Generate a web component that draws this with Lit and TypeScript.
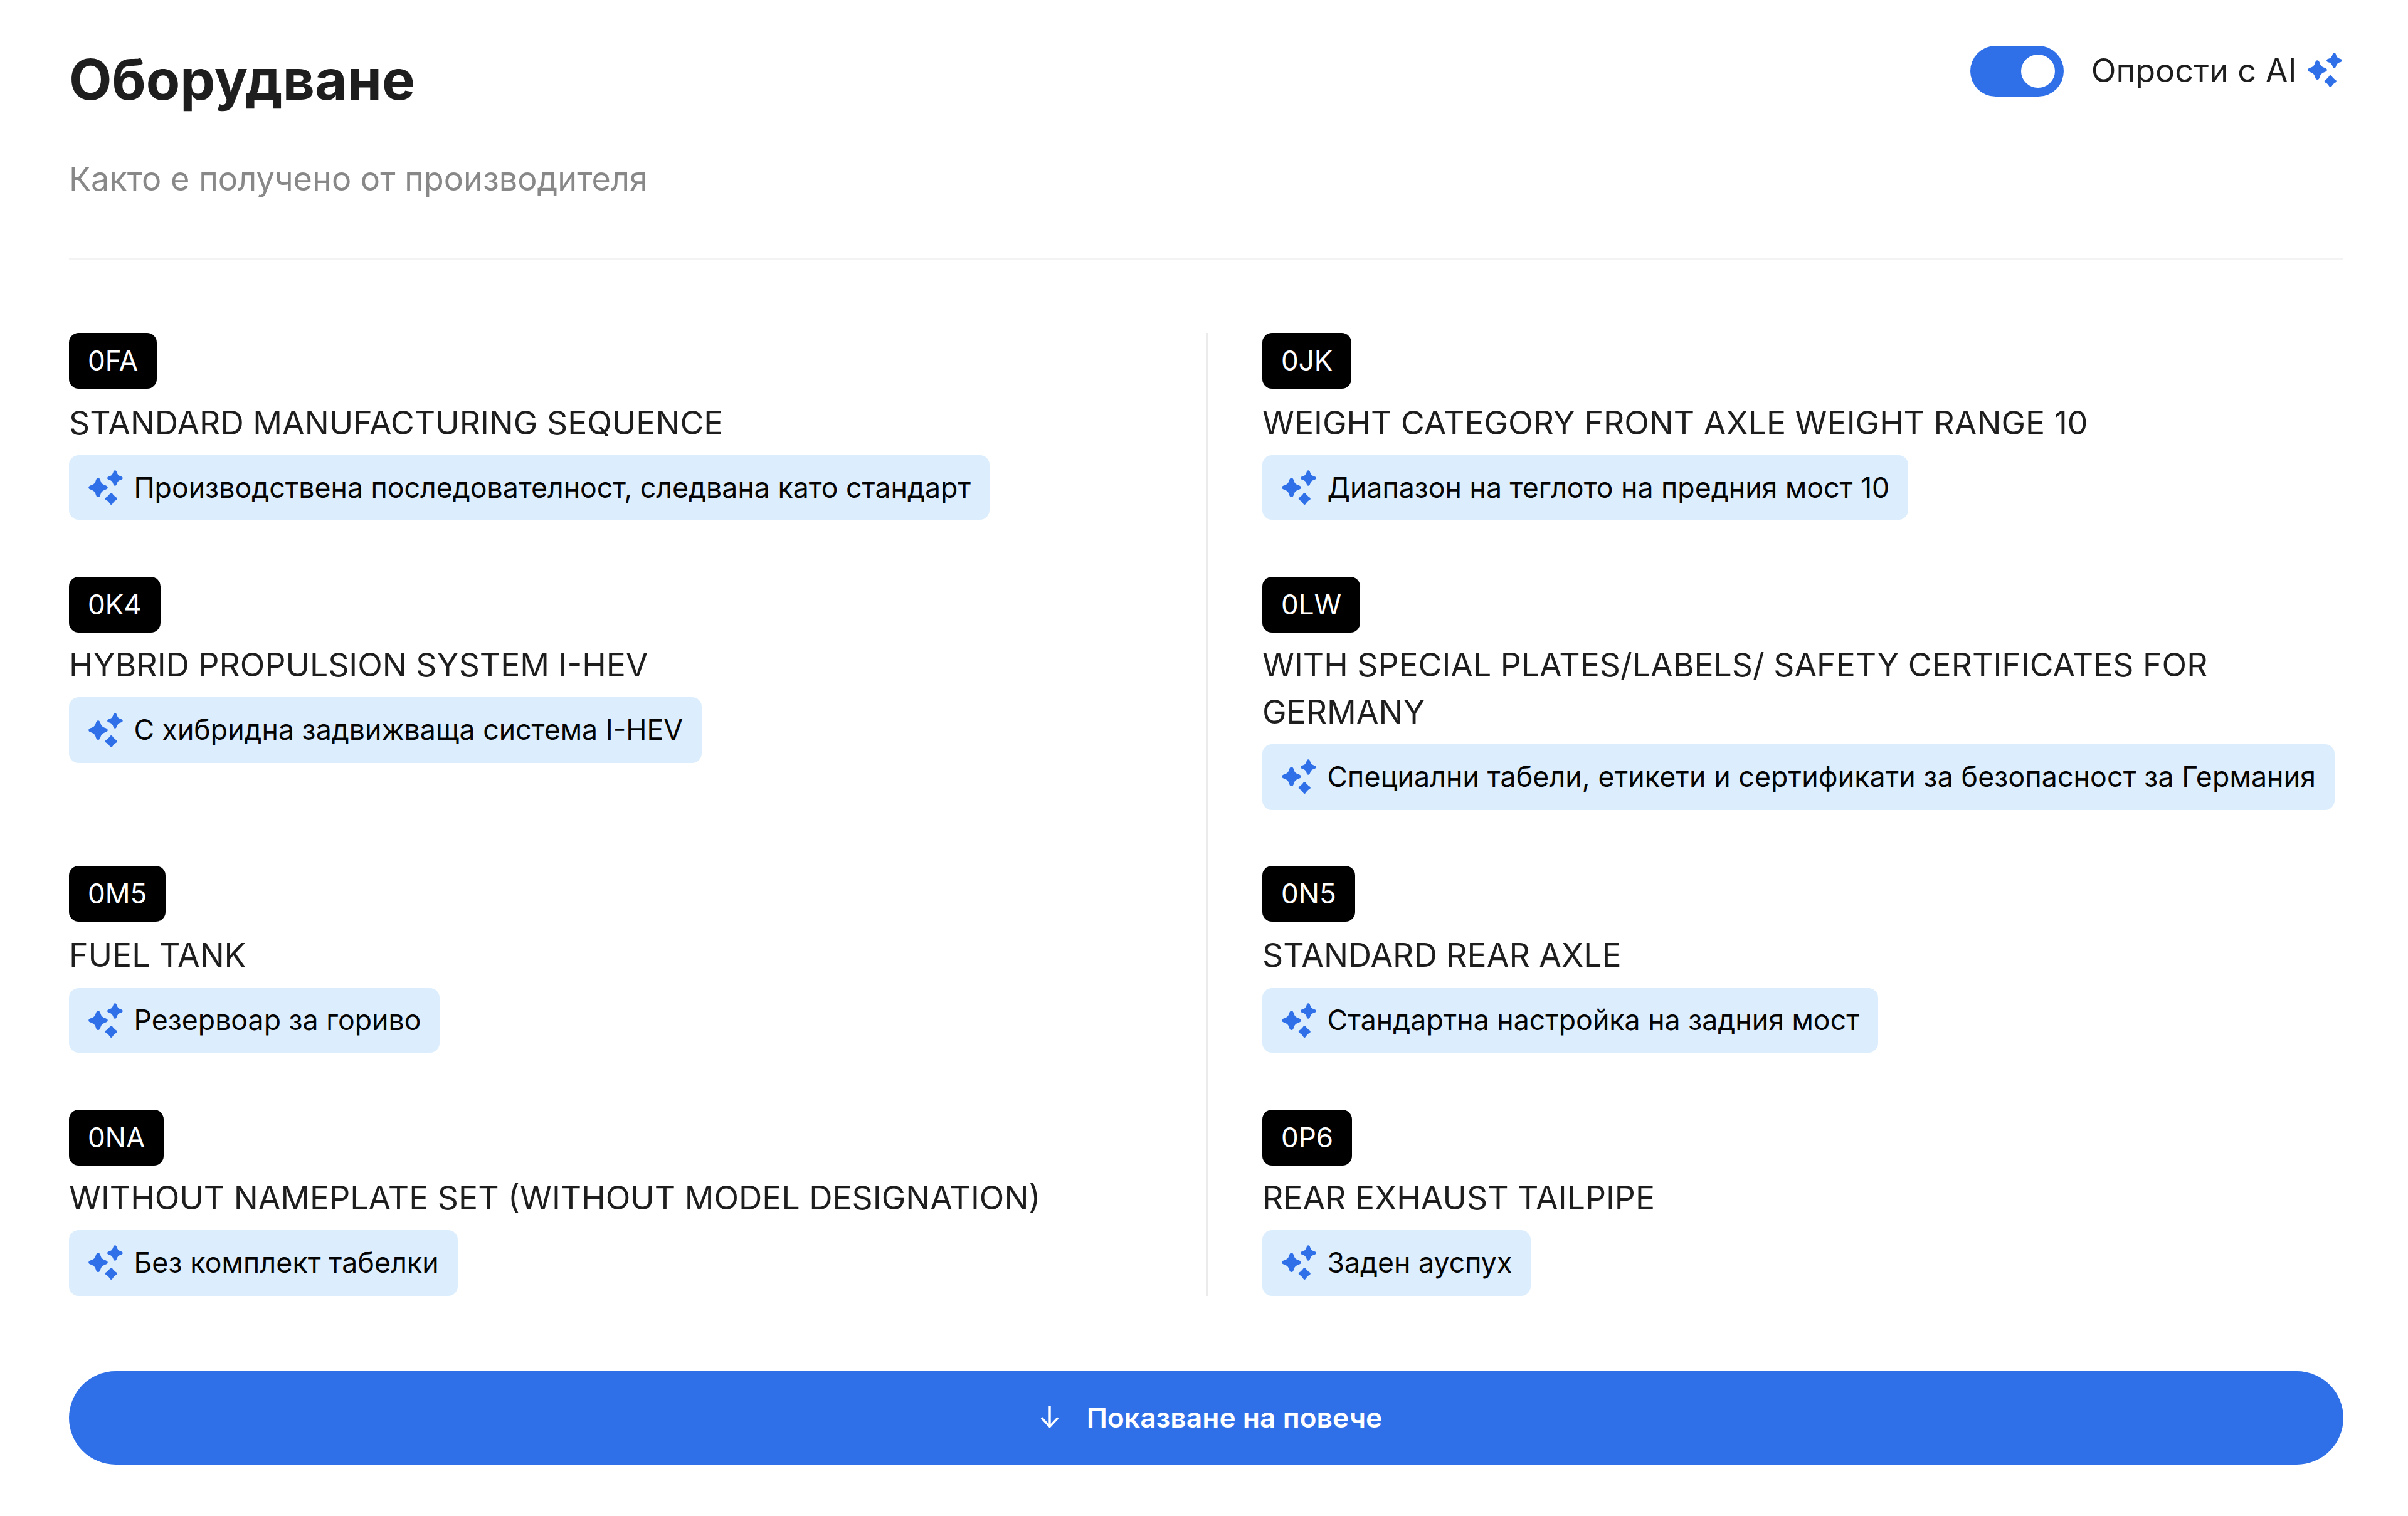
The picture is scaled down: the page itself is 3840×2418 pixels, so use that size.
import { LitElement, html, css, svg } from "lit";
import { customElement, property, state } from "lit/decorators.js";
import { classMap } from "lit/directives/class-map.js";

interface Equipment {
  code: string;
  name: string;
  simplified: string;
  loose?: boolean;
}

const EQUIPMENT: Equipment[] = [
  { code: "0FA", name: "STANDARD MANUFACTURING SEQUENCE", simplified: "Производствена последователност, следвана като стандарт" },
  { code: "0JK", name: "WEIGHT CATEGORY FRONT AXLE WEIGHT RANGE 10", simplified: "Диапазон на теглото на предния мост 10" },
  { code: "0K4", name: "HYBRID PROPULSION SYSTEM I-HEV", simplified: "С хибридна задвижваща система I-HEV" },
  { code: "0LW", name: "WITH SPECIAL PLATES/LABELS/ SAFETY CERTIFICATES FOR GERMANY", simplified: "Специални табели, етикети и сертификати за безопасност за Германия", loose: true },
  { code: "0M5", name: "FUEL TANK", simplified: "Резервоар за гориво" },
  { code: "0N5", name: "STANDARD REAR AXLE", simplified: "Стандартна настройка на задния мост" },
  { code: "0NA", name: "WITHOUT NAMEPLATE SET (WITHOUT MODEL DESIGNATION)", simplified: "Без комплект табелки", loose: true },
  { code: "0P6", name: "REAR EXHAUST TAILPIPE", simplified: "Заден ауспух" },
];

// One four-pointed star: centre, radius and how far the waist sits from the centre.
const star = (cx: number, cy: number, r: number, waist: number) => {
  const w = waist * r;
  const m = 0.15 * r;
  // Draws from the tip in direction a round the inner corner to the tip in direction b.
  const corner = (ax: number, ay: number, bx: number, by: number) => {
    const at = (a: number, b: number) => `${(cx + ax * a + bx * b).toFixed(2)},${(cy + ay * a + by * b).toFixed(2)}`;
    return `C${at(r, m)} ${at(r * 0.88, m * 1.3)} ${at(r * 0.64, w * 0.74)}Q${at(w, w)} ${at(w * 0.74, r * 0.64)}C${at(m * 1.3, r * 0.88)} ${at(m, r)} ${at(0, r)}`;
  };
  return `M${cx},${cy - r}${corner(0, -1, 1, 0)}${corner(1, 0, 0, 1)}${corner(0, 1, -1, 0)}${corner(-1, 0, 0, -1)}Z`;
};

@customElement("ai-sparkles")
export class AiSparkles extends LitElement {
  static styles = css`
    :host { display: block; flex: none; width: 55px; height: 55px; }
    .icon { display: block; width: 100%; height: 100%; fill: #2f70e9; }
  `;
  render() {
    return html`<svg class="icon" viewBox="0 0 55 55">
      ${svg`<path d=${star(15.5, 27.6, 15.3, 0.37)} />
      <path d=${star(42.4, 12.5, 12.3, 0.37)} />
      <path d=${star(36.3, 45.4, 9.5, 0.49)} />`}
    </svg>`;
  }
}

@customElement("equipment-item")
export class EquipmentItem extends LitElement {
  static styles = css`
    :host { display: block; }
    .item { display: flex; flex-direction: column; align-items: flex-start; padding-bottom: 1.9px; }
    .code {
      height: 89px; padding: 0 30px; border-radius: 15.5px; background: #000; color: #fff;
      font-size: 44px; line-height: 89px; margin-bottom: 16.6px;
    }
    .name { font-size: 51.74px; line-height: 74.5px; color: #1e1e1e; margin-bottom: 14.6px; }
    .simplified {
      display: flex; align-items: center; gap: 17.2px; height: 103.4px; box-sizing: border-box;
      padding: 0 29.8px 0 31.2px; border-radius: 15.5px; background: #dceefd; color: #050505;
      font-size: 44.66px; white-space: nowrap;
    }
    .loose { letter-spacing: 0.12px; }
    .even { padding-bottom: 0; }
    .even .code { margin-bottom: 14px; }
    .even .simplified { height: 105px; padding-bottom: 1.6px; }
  `;
  @property({ attribute: false }) item!: Equipment;
  @property({ type: Boolean }) even = false;
  @property({ type: Boolean }) ai = false;
  render() {
    const { code, name, simplified, loose } = this.item;
    return html`<div class=${classMap({ item: true, even: this.even })}>
      <div class="code">${code}</div>
      <div class="name">${name}</div>
      ${this.ai
        ? html`<div class="simplified">
            <ai-sparkles></ai-sparkles><span class=${classMap({ loose: !!loose })}>${simplified}</span>
          </div>`
        : null}
    </div>`;
  }
}

@customElement("app-root")
export class AppRoot extends LitElement {
  static styles = css`
    :host {
      display: block; box-sizing: border-box; min-height: 2418px; background: #fff; color: #1e1e1e;
      padding: 73px 103px 0 110px; font-family: Inter, "Liberation Sans", sans-serif;
    }
    .header {
      display: flex; justify-content: space-between; align-items: flex-start;
      height: 338px; border-bottom: 3px solid #f3f3f3;
    }
    .title { margin: 0; font-size: 88.9px; line-height: 108px; font-weight: 700; }
    .subtitle { margin: 66.5px 0 0; font-size: 52.2px; line-height: 75px; color: #888; }
    .simplify { display: flex; align-items: center; }
    .switch {
      display: flex; align-items: center; justify-content: flex-end; width: 149px; height: 81px;
      box-sizing: border-box; padding: 0 14px; border: 0; border-radius: 41px; background: #2f70e9;
    }
    .switch.off { justify-content: flex-start; }
    .knob { width: 54px; height: 53px; border-radius: 50%; background: #fff; }
    .label { margin: 0 17px 3px 44px; font-size: 52px; line-height: 75px; }
    .simplify ai-sparkles { margin: 0 2.5px 5px 0; }
    .list {
      display: grid; grid-template-columns: 1813px 3px 1fr; grid-template-rows: repeat(4, auto);
      row-gap: 89px; padding-top: 117.3px;
    }
    .rule { grid-column: 2; grid-row: 1 / -1; background: #ebebeb; }
    .left { grid-column: 1; }
    .right { grid-column: 3; padding-left: 87px; }
    .more {
      display: flex; align-items: center; justify-content: center; gap: 28px; width: 100%; height: 149px;
      margin-top: 119.7px; padding: 0; border: 0; border-radius: 75px; background: #2f70e9; color: #fff;
      font: 600 44.4px/60px Inter, "Liberation Sans", sans-serif;
    }
    .arrow { width: 62px; height: 62px; fill: none; stroke: #fff; stroke-width: 3.4; }
  `;
  @state() private ai = true;

  render() {
    return html`
      <header class="header">
        <div>
          <h1 class="title">Оборудване</h1>
          <p class="subtitle">Както е получено от производителя</p>
        </div>
        <div class="simplify">
          <button class=${classMap({ switch: true, off: !this.ai })} role="switch" aria-checked=${this.ai}
            @click=${() => (this.ai = !this.ai)}><span class="knob"></span></button>
          <span class="label">Опрости с AI</span>
          <ai-sparkles></ai-sparkles>
        </div>
      </header>
      <div class="list">
        <div class="rule"></div>
        ${EQUIPMENT.map((item, i) => html`<equipment-item
          class=${i % 2 ? "right" : "left"}
          .item=${item} .even=${Math.floor(i / 2) % 2 === 1} .ai=${this.ai}></equipment-item>`)}
      </div>
      <button class="more">
        <svg class="arrow" viewBox="0 0 62 62"><path d="M31 12.5V46M18 31.5L31 45.5L44 31.5" /></svg>
        <span>Показване на повече</span>
      </button>
    `;
  }
}
